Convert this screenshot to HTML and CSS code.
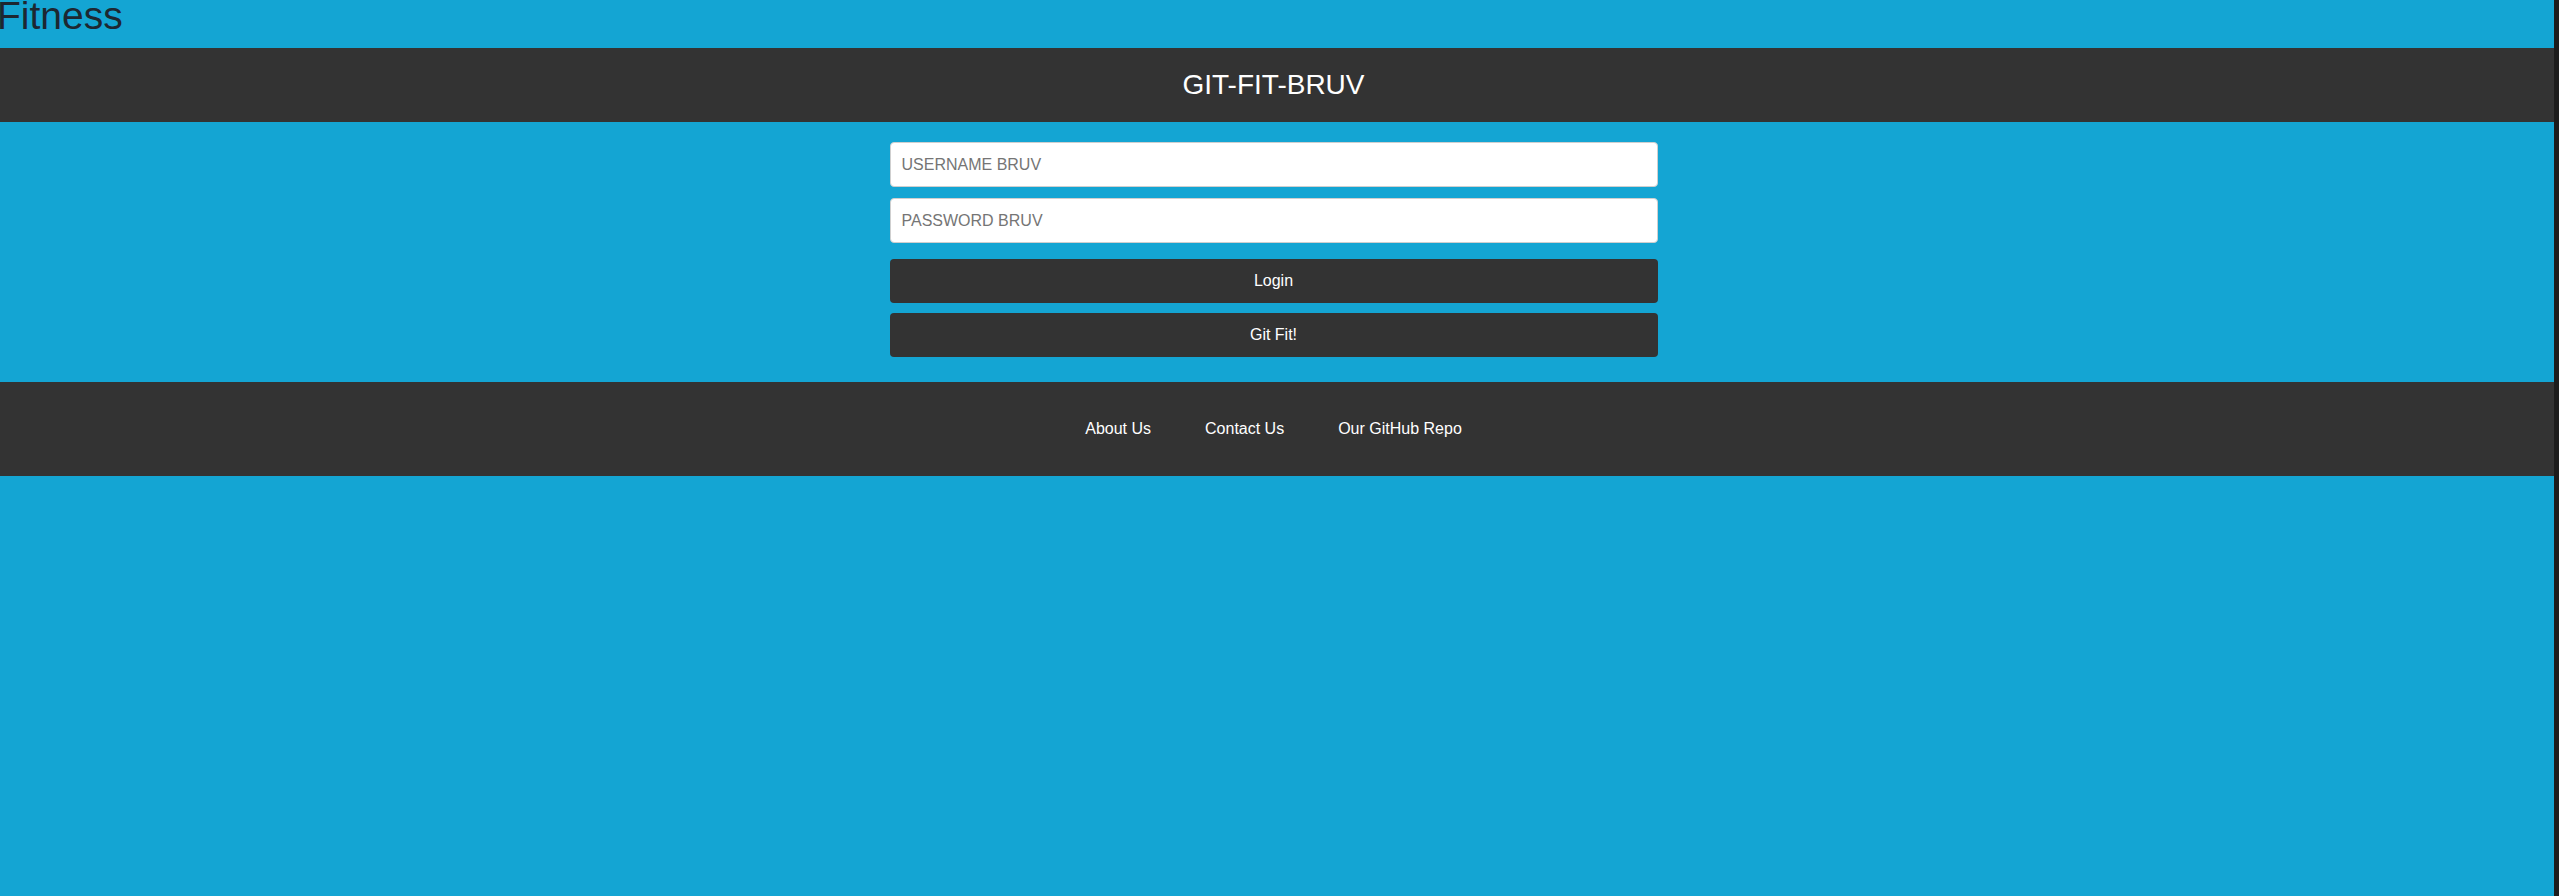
FILE: index.html
```html
<!DOCTYPE html>
<html lang="en">
<head>
<meta charset="utf-8">
<title>Fitness</title>
<link rel="stylesheet" href="styles.css">
</head>
<body>
<div class="page">
  <div class="brand">Fitness</div>
  <header class="topbar">
    <h1 class="title">GIT-FIT-BRUV</h1>
  </header>
  <main class="main">
    <form class="login-form">
      <input class="field" type="text" placeholder="USERNAME BRUV">
      <input class="field field-last" type="password" placeholder="PASSWORD BRUV">
      <button class="btn" type="button">Login</button>
      <button class="btn" type="button">Git Fit!</button>
    </form>
  </main>
  <footer class="footer">
    <a class="footer-link" href="#">About Us</a>
    <a class="footer-link" href="#">Contact Us</a>
    <a class="footer-link" href="#">Our GitHub Repo</a>
  </footer>
</div>
</body>
</html>
```
FILE: styles.css
```css
html, body {
  margin: 0;
  padding: 0;
}
body {
  background: #1c1c1c;
  font-family: "Liberation Sans", Arial, Helvetica, sans-serif;
  overflow: hidden;
}
.page {
  margin-left: -3px;
  margin-right: 5px;
  min-height: 896px;
  background: #14a5d3;
}
.brand {
  height: 48px;
  font-size: 39px;
  line-height: 32px;
  color: #1d2731;
}
.topbar {
  height: 74px;
  padding-right: 4px;
  background: #333333;
  display: flex;
  align-items: center;
  justify-content: center;
}
.title {
  margin: 0;
  font-weight: normal;
  font-size: 28px;
  color: #ffffff;
}
.main {
  padding: 20px 4px 25px 0;
}
.login-form {
  width: 768px;
  margin: 0 auto;
  display: flex;
  flex-direction: column;
}
.field {
  box-sizing: border-box;
  height: 45px;
  margin: 0 0 11px;
  padding: 0 11px;
  border: 1px solid #cfcfcf;
  border-radius: 4px;
  background: #ffffff;
  font-family: "Liberation Sans", Arial, sans-serif;
  font-size: 16px;
  color: #333;
}
.field::placeholder {
  color: #757575;
}
.field-last {
  margin-bottom: 16px;
}
.btn {
  box-sizing: border-box;
  height: 44px;
  margin: 0 0 10px;
  border: none;
  border-radius: 4px;
  background: #333333;
  color: #ffffff;
  font-family: "Liberation Sans", Arial, sans-serif;
  font-size: 16px;
}
.btn:last-child {
  margin-bottom: 0;
}
.footer {
  height: 94px;
  padding-right: 4px;
  background: #333333;
  display: flex;
  align-items: center;
  justify-content: center;
  gap: 54px;
}
.footer-link {
  color: #ffffff;
  text-decoration: none;
  font-size: 16px;
}
```
